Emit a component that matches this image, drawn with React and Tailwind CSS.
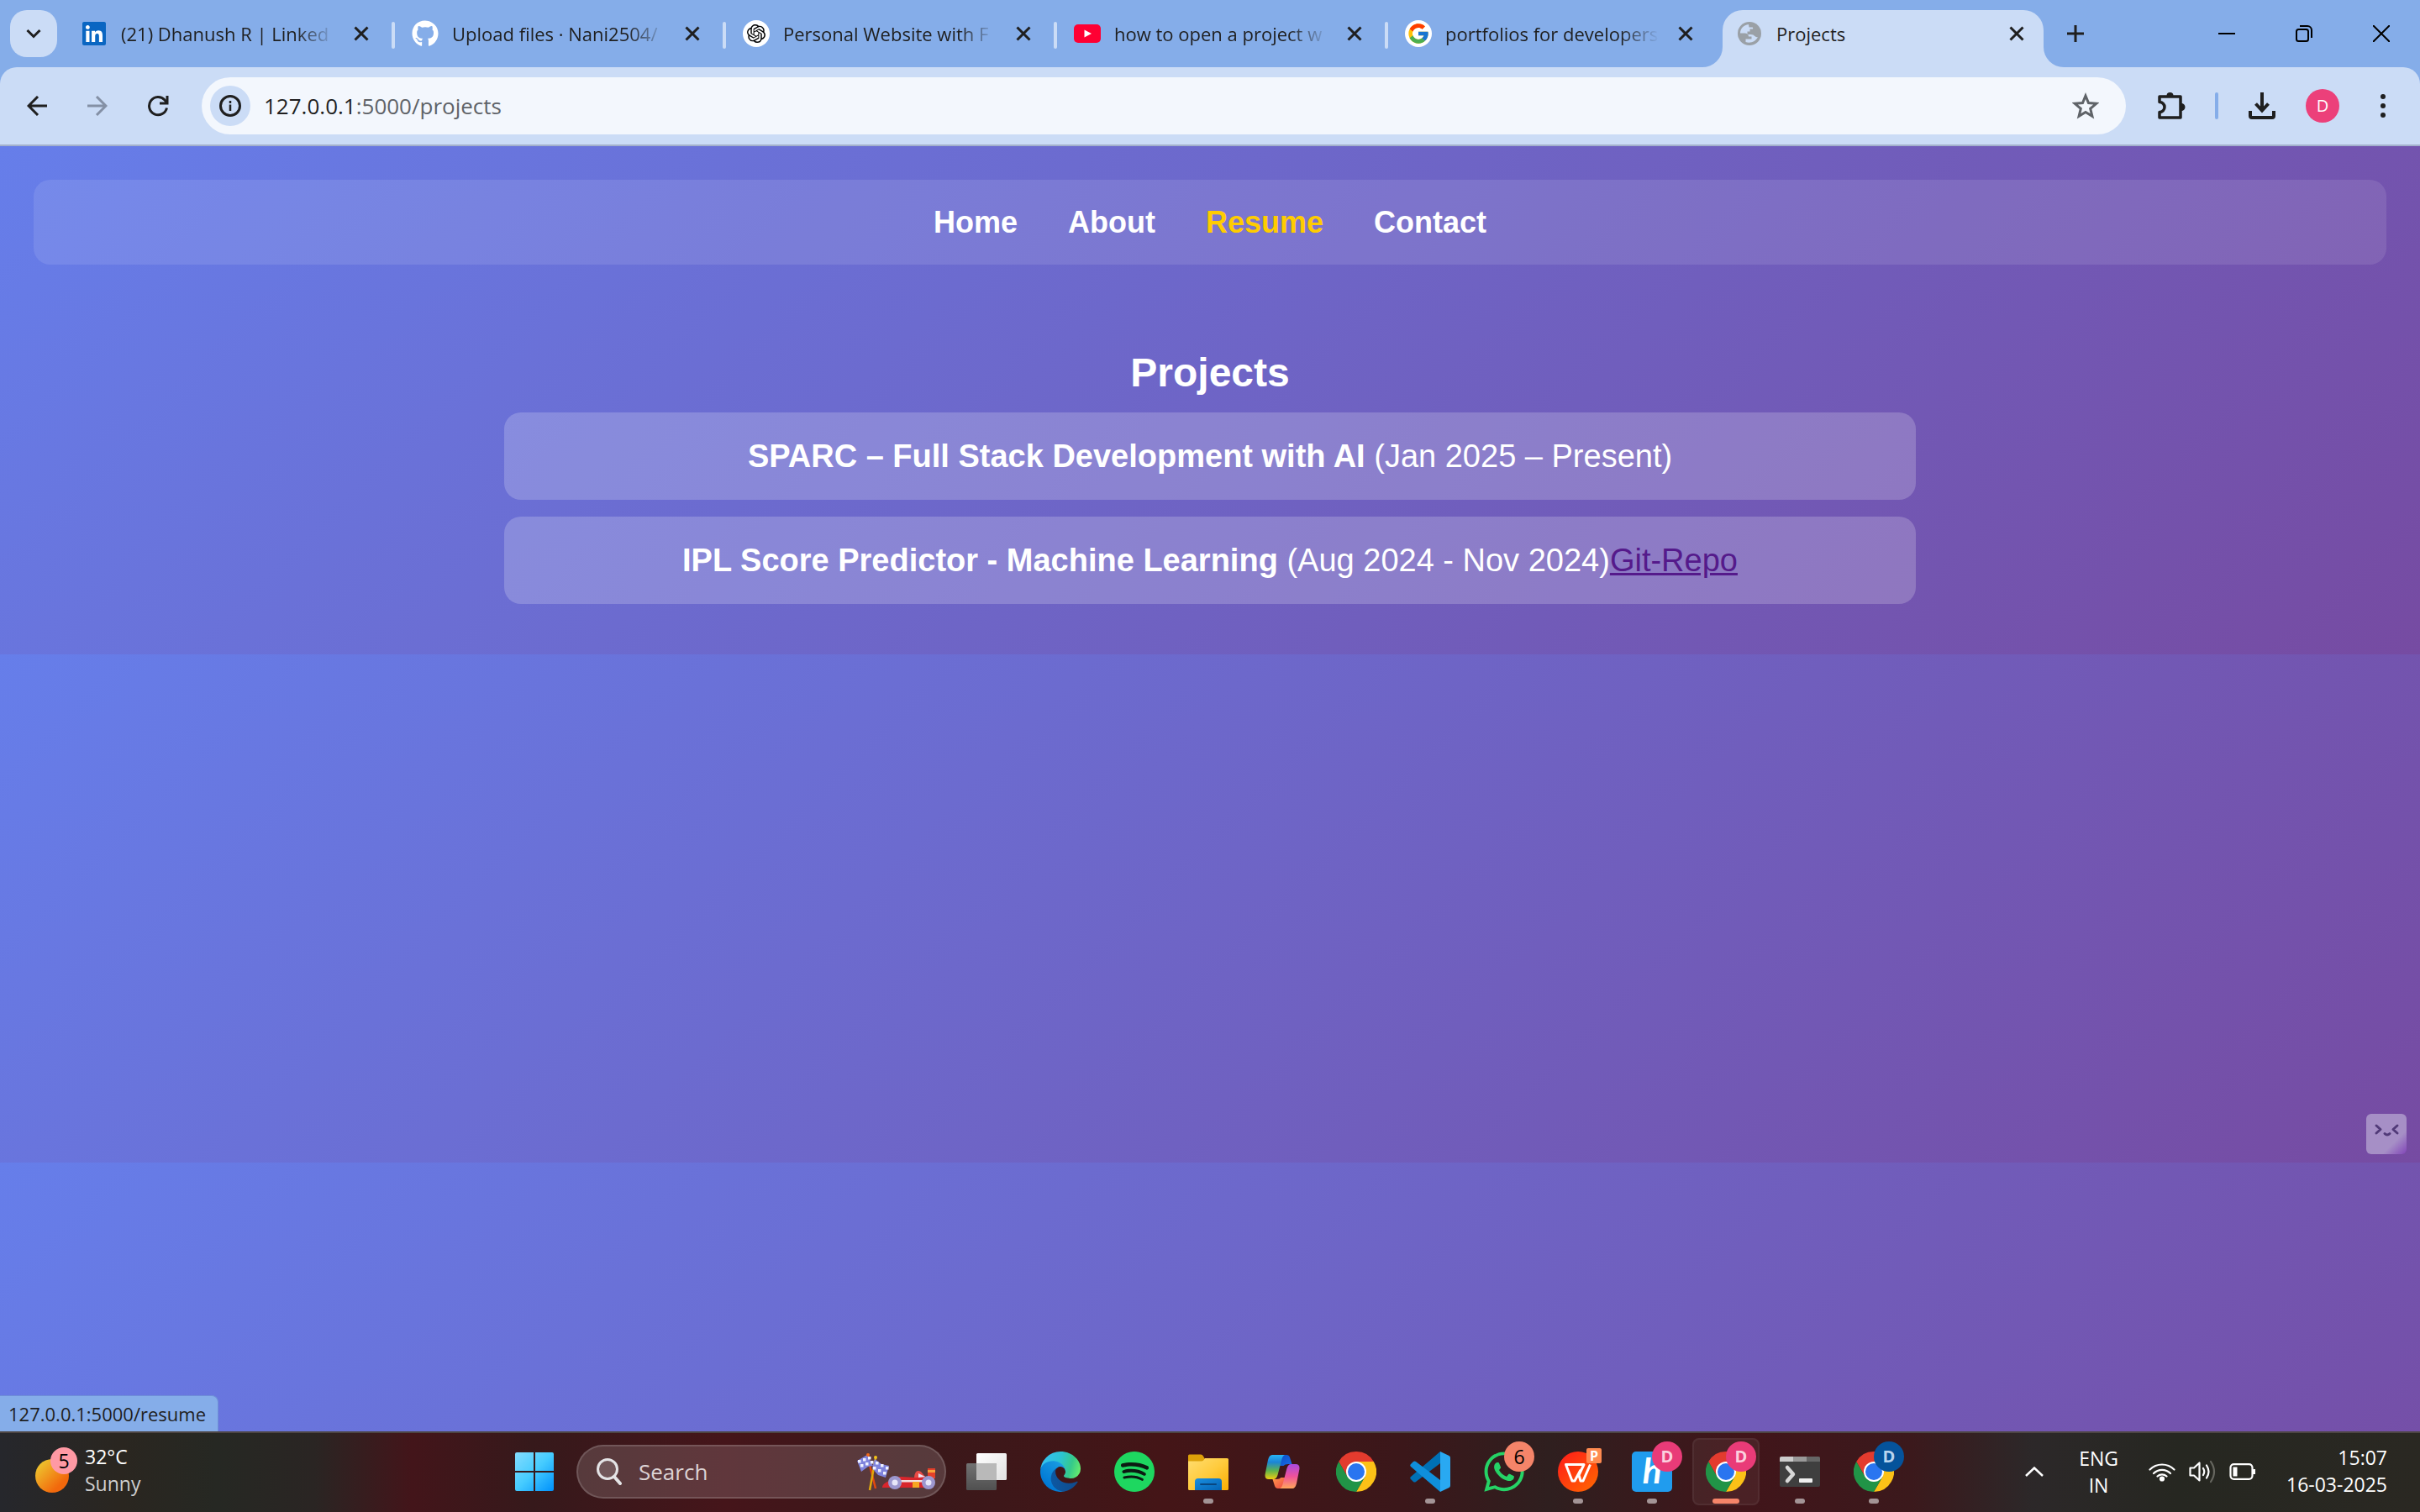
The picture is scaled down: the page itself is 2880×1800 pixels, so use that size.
import React from "react";
import { FaGithub, FaSpotify, FaWhatsapp } from "react-icons/fa";
import { FaLinkedin } from "react-icons/fa6";
import { FcGoogle } from "react-icons/fc";
import { SiOpenai } from "react-icons/si";

/* ---------- favicons ---------- */

function LinkedInIcon() {
  return (
    <span className="flex size-7 items-center justify-center rounded-xs bg-[linear-gradient(#fff,#fff)] bg-[length:22px_22px] bg-center bg-no-repeat">
      <FaLinkedin className="size-8 shrink-0 text-[#0a66c2]" />
    </span>
  );
}

function OpenAiIcon() {
  return (
    <span className="flex size-8 items-center justify-center rounded-full bg-white">
      <SiOpenai className="size-[22px] text-black" />
    </span>
  );
}

function YouTubeIcon() {
  return (
    <svg viewBox="0 0 32 32" className="size-8">
      <rect y="5" width="32" height="22" rx="5" fill="#ff0033" />
      <path d="M12.500 11.500 21 16l-8.500 4.500z" fill="#fff" />
    </svg>
  );
}

function GoogleIcon() {
  return (
    <span className="flex size-8 items-center justify-center rounded-full bg-white">
      <FcGoogle className="size-7" />
    </span>
  );
}

function GlobeIcon() {
  return (
    <svg viewBox="0 0 28 28" className="size-7">
      <circle cx="14" cy="14" r="14" fill="#9aa0a6" />
      <path
        d="M13 3C7 3.500 3 8.500 3 13.500h5.500c2.500 0 4.500 1.500 4.500 4h3.500v3H9.500v3.500c5.500 2 12-.5 14.500-6-1 .5-2 .3-3-.5-2-1.700-3-2.500-5.500-2.500h-4v-3.500h3V8.500h3.500c.5-1.500 0-2-1-2h-3.500z"
        fill="#cbdcf6"
      />
    </svg>
  );
}

/* ---------- browser window ---------- */

const tabs = [
  { title: "(21) Dhanush R | Linked", icon: <LinkedInIcon /> },
  { title: "Upload files · Nani2504/", icon: <FaGithub className="size-8 text-white" /> },
  { title: "Personal Website with F", icon: <OpenAiIcon /> },
  { title: "how to open a project w", icon: <YouTubeIcon /> },
  { title: "portfolios for developers", icon: <GoogleIcon /> },
  { title: "Projects", icon: <GlobeIcon />, active: true },
];

function CloseGlyph() {
  return (
    <svg viewBox="0 0 32 32" className="size-8" fill="none" stroke="#1f1f1f" strokeWidth="3">
      <path d="m8.500 8.500 15 15m0-15-15 15" />
    </svg>
  );
}

function Tab({ tab, last }) {
  return (
    <div className="relative flex h-full w-[394px] min-w-0 items-center pt-1">
      {tab.active && (
        <div className="absolute inset-x-1.5 top-3 bottom-0 rounded-t-3xl bg-[#cbdcf6]">
          <div className="absolute right-full bottom-0 size-6 overflow-hidden">
            <div className="size-6 rounded-br-3xl shadow-[12px_12px_0_12px_#cbdcf6]" />
          </div>
          <div className="absolute bottom-0 left-full size-6 overflow-hidden">
            <div className="size-6 rounded-bl-3xl shadow-[-12px_12px_0_12px_#cbdcf6]" />
          </div>
        </div>
      )}
      <div className="relative -mt-1 flex min-w-0 flex-1 items-center px-[22px]">
        <span className="flex size-8 shrink-0 items-center justify-center">{tab.icon}</span>
        <span
          className={
            "mr-4 ml-4 min-w-0 flex-1 text-[22px] leading-8 whitespace-nowrap text-[#1f1f1f] " +
            (tab.active ? "" : "[mask-image:linear-gradient(to_right,#000_82%,transparent)]")
          }
        >
          {tab.title}
        </span>
        <button type="button" aria-label={"Close " + tab.title} className="shrink-0">
          <CloseGlyph />
        </button>
      </div>
      {!tab.active && !last && <span className="-mx-0.5 h-8 w-1 rounded-full bg-[#cbdcf6]" />}
    </div>
  );
}

function TabStrip() {
  return (
    <div className="flex h-20 items-center bg-[#85ade9]">
      <button type="button" aria-label="Search tabs" className="mr-1.5 ml-3 flex size-14 shrink-0 items-center justify-center rounded-[20px] bg-[#cbdcf6]">
        <svg viewBox="0 0 20 20" className="size-5" fill="none" stroke="#1f1f1f" strokeWidth="3">
          <path d="m2.500 6 7.500 7.500L17.500 6" />
        </svg>
      </button>
      <div className="flex h-full min-w-0 items-center">
        {tabs.map((tab, i) => (
          <Tab key={tab.title} tab={tab} last={i === 4} />
        ))}
      </div>
      <button type="button" aria-label="New tab" className="ml-3 flex size-10 shrink-0 items-center justify-center">
        <svg viewBox="0 0 20 20" className="size-5" fill="none" stroke="#1f1f1f" strokeWidth="3">
          <path d="M10 0v20M0 10h20" />
        </svg>
      </button>
      <div className="ml-auto flex h-full shrink-0">
        <button type="button" aria-label="Minimise" className="flex w-[92px] items-center justify-center">
          <svg viewBox="0 0 20 20" className="size-5" stroke="#000" strokeWidth="2">
            <path d="M0 10h20" />
          </svg>
        </button>
        <button type="button" aria-label="Restore" className="flex w-[92px] items-center justify-center">
          <svg viewBox="0 0 20 20" className="size-5" fill="none" stroke="#000" strokeWidth="2">
            <rect x="1" y="5" width="14" height="14" rx="2.500" />
            <path d="M5 1h9a5 5 0 0 1 5 5v9" />
          </svg>
        </button>
        <button type="button" aria-label="Close window" className="flex w-[92px] items-center justify-center">
          <svg viewBox="0 0 20 20" className="size-5" fill="none" stroke="#000" strokeWidth="2">
            <path d="m0 0 20 20M20 0 0 20" />
          </svg>
        </button>
      </div>
    </div>
  );
}

function ArrowGlyph({ className, d }) {
  return (
    <svg viewBox="0 0 24 24" className={className} fill="none" stroke="currentColor" strokeWidth="3">
      <path d={d} />
    </svg>
  );
}

function Toolbar() {
  return (
    <div className="bg-[#85ade9]">
      <div className="flex h-[94px] items-center rounded-t-[20px] border-b-2 border-[#a3b1cc] bg-[#cbdcf6] pr-6 text-[#1f1f1f]">
        <button type="button" aria-label="Back" className="ml-2 flex size-[72px] items-center justify-center">
          <ArrowGlyph className="size-6" d="M24 12H2M13 1 2 12l11 11" />
        </button>
        <button type="button" aria-label="Forward" className="flex size-[72px] items-center justify-center text-[#8490a5]">
          <ArrowGlyph className="size-6" d="M0 12h22M11 1l11 11-11 11" />
        </button>
        <button type="button" aria-label="Reload" className="flex size-[72px] items-center justify-center">
          <svg viewBox="0 0 26 26" className="size-[26px]" fill="none" stroke="currentColor" strokeWidth="3">
            <path d="M23.500 15.500A10.600 10.600 0 1 1 21 6l2 3" />
            <path d="M24 1v9h-9" />
          </svg>
        </button>
        <div className="ml-4 flex h-[68px] min-w-0 flex-1 items-center rounded-full bg-[#f3f7fd] pr-7 pl-2.5 text-[26px] leading-9">
          <button type="button" aria-label="Site information" className="flex size-12 items-center justify-center rounded-full bg-[#cbdcf6]">
            <svg viewBox="0 0 26 26" className="size-[26px]" fill="none" stroke="currentColor" strokeWidth="3">
              <circle cx="13" cy="13" r="11.500" />
              <path d="M13 11.500V19M13 7v3" strokeWidth="2.500" />
            </svg>
          </button>
          <label htmlFor="address" className="ml-4">
            127.0.0.1
          </label>
          <input id="address" defaultValue=":5000/projects" className="min-w-0 flex-1 bg-transparent text-[#5f6368] outline-none" />
          <button type="button" aria-label="Bookmark this tab" className="flex size-10 items-center justify-center text-[#5f6368]">
            <svg viewBox="0 0 32 32" className="size-8" fill="none" stroke="currentColor" strokeWidth="3">
              <path d="m16 4 3.500 8.600 9.300.7-7.100 6 2.200 9L16 23.500l-7.900 4.800 2.200-9-7.100-6 9.300-.7z" />
            </svg>
          </button>
        </div>
        <button type="button" aria-label="Extensions" className="ml-[34px] flex size-10 items-center justify-center">
          <svg viewBox="0 0 36 36" className="size-9" fill="none" stroke="currentColor" strokeWidth="3.500" strokeLinejoin="round">
            <path d="M4 7h25v25H4v-6.500a5.500 5.500 0 0 0 0-12z" />
            <path d="M12.500 6a4 4 0 0 1 8 0zM30 15a4 4 0 0 1 0 9z" fill="currentColor" stroke="none" />
          </svg>
        </button>
        <span className="mx-8 h-8 w-1 rounded-full bg-[#85ade9]" />
        <button type="button" aria-label="Downloads" className="flex size-10 items-center justify-center">
          <svg viewBox="0 0 32 32" className="size-8" fill="none" stroke="currentColor" strokeWidth="4">
            <path d="M16 0v22M8.500 13.500l7.500 8 7.500-8M2 22v6q0 2 2 2h24q2 0 2-2v-6" />
          </svg>
        </button>
        <button type="button" className="ml-8 flex size-10 items-center justify-center rounded-full bg-[#ec407a] text-xl text-white">
          D
        </button>
        <button type="button" aria-label="Menu" className="ml-8 flex size-10 items-center justify-center">
          <svg viewBox="0 0 6 28" className="h-7 w-1.5" fill="currentColor">
            <circle cx="3" cy="3" r="3" />
            <circle cx="3" cy="14" r="3" />
            <circle cx="3" cy="25" r="3" />
          </svg>
        </button>
      </div>
    </div>
  );
}

/* ---------- web page ---------- */

const links = ["Home", "About", "Resume", "Contact"];

function Page() {
  return (
    <main className="relative flex-1 bg-[linear-gradient(135deg,#667eea,#764ba2)] bg-[length:100%_605px] bg-repeat-y p-10 font-['Liberation_Sans',Arial,sans-serif] text-white">
      <nav className="flex justify-center gap-[60px] rounded-[20px] bg-white/10 py-[30px] text-4xl leading-[41px] font-bold">
        {links.map((link) => (
          <a key={link} href={"#" + link.toLowerCase()} className={link === "Resume" ? "text-[#ffcc00]" : "text-white"}>
            {link}
          </a>
        ))}
      </nav>
      <section className="mx-auto mt-[101px] w-3/5 text-center">
        <h2 className="text-5xl leading-[55px] font-bold">Projects</h2>
        <ul className="mt-5 flex flex-col gap-5 text-[38px] leading-[44px]">
          <li className="rounded-[20px] bg-white/20 py-[30px]">
            <strong>SPARC – Full Stack Development with AI</strong> (Jan 2025 – Present)
          </li>
          <li className="rounded-[20px] bg-white/20 py-[30px]">
            <strong>IPL Score Predictor - Machine Learning</strong> (Aug 2024 - Nov 2024)
            <a href="#repo" className="text-[#551a8b] underline">
              Git-Repo
            </a>
          </li>
        </ul>
      </section>

      <button
        type="button"
        aria-label="Assistant"
        className="absolute right-4 bottom-[330px] size-12 rounded-md bg-[linear-gradient(135deg,#a68fc6_70%,#8145b8)]"
      >
        <svg viewBox="0 0 48 48" className="size-12" fill="none" stroke="#513a78" strokeWidth="3" strokeLinecap="round" strokeLinejoin="round">
          <path d="m12 14 5 4.500-5 4.500M37 14l-5 4.500 5 4.500M22 23.500q3 3 6 0" />
        </svg>
      </button>
      <div className="absolute bottom-0 left-0 rounded-tr-lg border-t border-r border-[#6f8fd8] bg-[#85ade9] py-1.5 pr-[14px] pl-2.5 font-['Open_Sans',sans-serif] text-[22px] leading-[30px] text-[#1f1f1f]">
        127.0.0.1:5000/resume
      </div>
    </main>
  );
}

/* ---------- taskbar icons ---------- */

function StartIcon() {
  return (
    <svg viewBox="0 0 46 46" className="size-[46px]">
      <defs>
        <linearGradient id="win" gradientUnits="userSpaceOnUse" x1="0" y1="0" x2="46" y2="46">
          <stop stopColor="#84dcfd" />
          <stop offset=".5" stopColor="#45cbff" />
          <stop offset="1" stopColor="#0091fb" />
        </linearGradient>
      </defs>
      <path fill="url(#win)" d="M2 0h20v22H0V2q0-2 2-2zM24 0h20q2 0 2 2v20H24zM0 24h22v22H2q-2 0-2-2zM24 24h22v20q0 2-2 2H24z" />
    </svg>
  );
}

function RaceArt() {
  const light = [
    [1, 9], [7, 7], [13, 5], [4, 14], [10, 12], [16, 10],
    [22, 11], [28, 14], [34, 17], [19, 17], [25, 20], [31, 23],
  ];
  return (
    <svg viewBox="0 0 94 46" className="h-[46px] w-[94px] shrink-0">
      <path d="m12 3 10 40" stroke="#e2490f" strokeWidth="2.500" />
      <path d="m22 7-7 38" stroke="#e0a80c" strokeWidth="2.500" />
      <path d="m0 10 12-7 7 13-6 1-8 6z" fill="#7f83dc" />
      <path d="m21 8 8 6 9 2-4 14-9-3-7-8z" fill="#7f83dc" />
      {light.map(([x, y]) => (
        <rect key={x + "-" + y} x={x} y={y} width="3.500" height="3.500" fill="#eef0ff" />
      ))}
      <circle cx="13" cy="3" r="2" fill="#f06a1c" />
      <circle cx="22" cy="6" r="2" fill="#f5c518" />
      <path d="M30 42q0-5 8-8 6-5 15-5l17 1 8-1h14v10l-8 3H33z" fill="#d9262c" />
      <path d="M50 33h28v2.500H50z" fill="#f3dede" />
      <path d="M66 35h8v7h-8z" fill="#f6a623" />
      <path d="M68 30q1-11 8-7l6 7z" fill="#e84b45" />
      <path d="M73 25l8 4-8 1z" fill="#efe4f4" />
      <path d="M84 19h9v12h-9z" fill="#e3402a" />
      <path d="M84 21h9v3h-9z" fill="#f8a33a" />
      <circle cx="45" cy="36" r="8" fill="#9c97cf" />
      <circle cx="45" cy="36" r="3.500" fill="#e7e6f8" />
      <circle cx="85" cy="36" r="8" fill="#9c97cf" />
      <circle cx="85" cy="36" r="3.500" fill="#e7e6f8" />
    </svg>
  );
}

function TaskViewIcon() {
  return (
    <svg viewBox="0 0 48 48" className="size-12">
      <defs>
        <linearGradient id="tvw" x1="0" y1="0" x2="1" y2="1">
          <stop stopColor="#fff" />
          <stop offset="1" stopColor="#e2e2e2" />
        </linearGradient>
        <linearGradient id="tvg" x1="0" y1="0" x2="0" y2="1">
          <stop stopColor="#727272" />
          <stop offset="1" stopColor="#505050" />
        </linearGradient>
      </defs>
      <rect x="12" y="2" width="36" height="32" rx="1.500" fill="url(#tvw)" />
      <rect x="0" y="14" width="36" height="32" rx="1.500" fill="url(#tvg)" />
      <path d="M12 14h24v20H12z" fill="#b9b9b9" />
    </svg>
  );
}

function EdgeIcon() {
  return (
    <svg viewBox="0 0 256 256" className="size-12">
      <defs>
        <linearGradient id="edA" gradientUnits="userSpaceOnUse" x1="58" y1="177" x2="237" y2="177">
          <stop stopColor="#0c59a4" />
          <stop offset="1" stopColor="#114a8b" />
        </linearGradient>
        <linearGradient id="edB" gradientUnits="userSpaceOnUse" x1="157" y1="99" x2="46" y2="221">
          <stop stopColor="#1b9de2" />
          <stop offset=".16" stopColor="#1595df" />
          <stop offset="1" stopColor="#0078d4" />
        </linearGradient>
        <linearGradient id="edC" gradientUnits="userSpaceOnUse" x1="10" y1="60" x2="250" y2="130">
          <stop stopColor="#35c1f1" />
          <stop offset=".45" stopColor="#2cc3d0" />
          <stop offset=".75" stopColor="#36c98a" />
          <stop offset="1" stopColor="#66eb6e" />
        </linearGradient>
      </defs>
      <path fill="url(#edA)" d="M231.110 190.540c-3.410 1.780-6.930 3.350-10.540 4.700a101.940 101.940 0 0 1-35.900 6.460c-47.320 0-88.540-32.550-88.540-74.320 0-11.370 6.440-21.870 16.730-27.300-42.800 1.800-53.800 46.400-53.800 72.530 0 73.880 68.090 81.370 82.760 81.370 7.910 0 19.840-2.300 27-4.560l1.310-.44a128.340 128.340 0 0 0 66.600-52.800 4 4 0 0 0-5.620-5.640z" />
      <path fill="url(#edB)" d="M105.730 241.420a79.200 79.200 0 0 1-22.740-21.340 80.720 80.720 0 0 1 29.530-120c3.120-1.470 8.450-4.130 15.540-4 10.130.08 19.650 4.900 25.720 13a31.880 31.880 0 0 1 6.300 18.260c0-.2 24.460-79.600-80-79.600-43.900 0-80 41.660-80 78.200-.17 19.330 3.970 38.450 12.120 56a128 128 0 0 0 156.370 67.110 75.550 75.550 0 0 1-62.780-7.630z" />
      <path fill="url(#edC)" d="M152.330 148.860c-.81 1.050-3.300 2.500-3.300 5.660 0 2.610 1.700 5.120 4.720 7.230 14.380 10 41.490 8.680 41.560 8.680a59.560 59.560 0 0 0 30.270-8.350 61.380 61.380 0 0 0 30.430-52.880c.26-22.410-8-37.310-11.340-43.910C223.460 23.840 177.720 0 128 0A128 128 0 0 0 0 126.200c.48-36.540 36.800-66.050 80-66.050 3.500 0 23.460.34 42 10.070 16.340 8.580 24.900 18.940 30.850 29.210 6.180 10.670 7.280 24.150 7.280 29.520 0 5.370-2.740 13.330-7.800 19.910z" />
    </svg>
  );
}

function SpotifyIcon() {
  return (
    <span className="flex size-12 items-center justify-center rounded-full bg-[radial-gradient(circle,#0c1a12_60%,#1ed760_61%)]">
      <FaSpotify className="size-12 text-[#1ed760]" />
    </span>
  );
}

function FolderIcon() {
  return (
    <svg viewBox="0 0 48 48" className="size-12">
      <defs>
        <linearGradient id="fol" x1="0" y1="0" x2="1" y2="1">
          <stop stopColor="#ffdd70" />
          <stop offset=".5" stopColor="#ffcb3d" />
          <stop offset="1" stopColor="#f9ad03" />
        </linearGradient>
        <linearGradient id="folb" x1="0" y1="0" x2="1" y2="1">
          <stop stopColor="#1a8fe0" />
          <stop offset="1" stopColor="#0463b3" />
        </linearGradient>
      </defs>
      <path d="M1.500 3.500H15q2 0 3 2L20 9v6H0V5q0-1.500 1.500-1.500z" fill="#dda109" />
      <path d="M0 11.500h16q2 0 3-2l1-1.500h26.500Q48 8 48 9.500v35q0 1.500-1.500 1.500h-45Q0 46 0 44.500z" fill="url(#fol)" />
      <path d="M8 46V36q0-4 4-4h24q4 0 4 4v10z" fill="url(#folb)" />
      <path d="M15 39h18" stroke="#08467f" strokeWidth="2" strokeLinecap="round" />
    </svg>
  );
}

function CopilotIcon() {
  return (
    <svg viewBox="0 0 48 48" className="size-12">
      <defs>
        <linearGradient id="cpA" x1="0" y1="0" x2="0" y2="1">
          <stop stopColor="#28b5f5" />
          <stop offset=".3" stopColor="#1b84d6" />
          <stop offset=".65" stopColor="#5fb34c" />
          <stop offset="1" stopColor="#f0cc10" />
        </linearGradient>
        <linearGradient id="cpB" x1="0" y1="0" x2="0" y2="1">
          <stop stopColor="#a84be0" />
          <stop offset=".5" stopColor="#f0529a" />
          <stop offset="1" stopColor="#ffa65a" />
        </linearGradient>
        <linearGradient id="cpC" x1="0" y1="0" x2="1" y2="1">
          <stop stopColor="#0a4fc4" />
          <stop offset="1" stopColor="#1a6ae8" />
        </linearGradient>
        <linearGradient id="cpD" x1="0" y1="0" x2="1" y2="1">
          <stop stopColor="#ff9a4a" />
          <stop offset="1" stopColor="#ee4444" />
        </linearGradient>
      </defs>
      <path d="M22 4h7q3 0 4 3l2.500 8H31q-4 0-5.500 2H20z" fill="url(#cpC)" />
      <path d="M26 44h-7q-3 0-4-3l-2.500-8H17q4 0 5.500-2H28z" fill="url(#cpD)" />
      <path d="M12 4h15q-2.500 1-3.500 5l-5 19q-1.500 5-5 5H8q-6 0-4-8L7 10q1.500-6 5-6z" fill="url(#cpA)" />
      <path d="M36 44H21q2.500-1 3.500-5l5-19q1.500-5 5-5H40q6 0 4 8l-3 15q-1.500 6-5 6z" fill="url(#cpB)" />
    </svg>
  );
}

function ChromeIcon() {
  return (
    <svg viewBox="0 0 48 48" className="size-12">
      <path d="M3.215 12A24 24 0 0 1 44.785 12H24v12L13.600 30z" fill="#e33b2e" />
      <path d="M44.785 12A24 24 0 0 1 24 48l10.400-18L24 24V12z" fill="#fcc117" />
      <path d="M24 48A24 24 0 0 1 3.215 12L13.600 30 24 24l10.400 6z" fill="#219447" />
      <circle cx="24" cy="24" r="12" fill="#fff" />
      <circle cx="24" cy="24" r="10" fill="#2a75f0" />
    </svg>
  );
}

function CodeIcon() {
  return (
    <svg viewBox="0 0 48 48" className="size-12">
      <path d="M36 0v14L7 36q-1.500 1-3 0l-3-3q-1.500-1.500 0-3z" fill="#0070b5" />
      <path d="M36 48V34L7 12q-1.500-1-3 0l-3 3q-1.500 1.500 0 3z" fill="#0f8fdb" />
      <path d="m36 0 10.500 5Q48 5.700 48 7.500v33q0 1.800-1.500 2.500L36 48z" fill="#29a9f2" />
    </svg>
  );
}

function WpsIcon() {
  return (
    <svg viewBox="0 0 48 48" className="size-12">
      <defs>
        <linearGradient id="wps" x1="0" y1="0" x2="1" y2="1">
          <stop stopColor="#ff1a1a" />
          <stop offset="1" stopColor="#ff6a00" />
        </linearGradient>
      </defs>
      <circle cx="24" cy="24" r="24" fill="url(#wps)" />
      <path d="m27 22-7 13h-3L9.500 15.500H31L25 28l2 7h3l8.500-19.500" fill="none" stroke="#fff" strokeWidth="3" strokeLinejoin="round" />
    </svg>
  );
}

function HIcon() {
  return (
    <span className="flex size-12 items-center justify-center rounded-[5px] bg-[#209cee] pb-1 font-['Lato',sans-serif] text-[42px] leading-none font-bold text-white italic">
      h
    </span>
  );
}

function TerminalIcon() {
  return (
    <svg viewBox="0 0 48 48" className="size-12">
      <path d="M0 8q0-2 2-2h44q2 0 2 2v32q0 2-2 2H2q-2 0-2-2z" fill="#3f3f3f" />
      <path d="M0 12V8q0-2 2-2h14v6z" fill="#cccccc" />
      <path d="M16 6h16v6H16z" fill="#999" />
      <path d="M32 6h14q2 0 2 2v4H32z" fill="#666" />
      <path d="m9 19 7 8-7 8" fill="none" stroke="#d8d8d8" strokeWidth="4.500" strokeLinecap="round" strokeLinejoin="round" />
      <rect x="23" y="32" width="16" height="5" rx="1" fill="#efefef" />
    </svg>
  );
}

/* ---------- taskbar ---------- */

const apps = [
  { name: "Task View", icon: <TaskViewIcon /> },
  { name: "Edge", icon: <EdgeIcon /> },
  { name: "Spotify", icon: <SpotifyIcon /> },
  { name: "File Explorer", icon: <FolderIcon />, open: true },
  { name: "Copilot", icon: <CopilotIcon /> },
  { name: "Chrome", icon: <ChromeIcon /> },
  { name: "Code", icon: <CodeIcon />, open: true },
  { name: "WhatsApp", icon: <FaWhatsapp className="size-[54px] text-[#25d366]" />, badge: "6", tone: "bg-[#f58469] text-black text-[23px]" },
  { name: "WPS", icon: <WpsIcon />, open: true, corner: "P" },
  { name: "H", icon: <HIcon />, open: true, badge: "D", tone: "bg-[#e93b78] text-[#fbd0de] text-xl font-bold" },
  { name: "Chrome, Projects", icon: <ChromeIcon />, active: true, badge: "D", tone: "bg-[#e93b78] text-[#fbd0de] text-xl font-bold" },
  { name: "Terminal", icon: <TerminalIcon />, open: true },
  { name: "Chrome, second profile", icon: <ChromeIcon />, open: true, badge: "D", tone: "bg-[#05539b] text-[#b9d4ee] text-xl font-bold" },
];

function AppButton({ app }) {
  return (
    <button
      type="button"
      aria-label={app.name}
      className={
        "relative mx-1 flex size-20 items-center justify-center rounded-lg " +
        (app.active ? "bg-white/5 ring-2 ring-white/5 ring-inset" : "")
      }
    >
      {app.icon}
      {app.badge && (
        <span className={"absolute top-1 right-1 flex size-9 items-center justify-center rounded-full leading-none " + app.tone}>
          {app.badge}
        </span>
      )}
      {app.corner && (
        <span className="absolute top-3 right-3 flex size-[18px] items-center justify-center rounded-xs bg-[#ff8a50] text-base leading-none font-bold text-white">
          {app.corner}
        </span>
      )}
      {app.open && <span className="absolute bottom-[2px] h-1.5 w-3 rounded-full bg-[#a39496]" />}
      {app.active && <span className="absolute bottom-[2px] h-1.5 w-8 rounded-full bg-[#f58469]" />}
    </button>
  );
}

function Taskbar() {
  return (
    <footer className="grid h-24 grid-cols-[1fr_auto_1fr] items-center border-t-2 border-[#4d4543] bg-[linear-gradient(90deg,#26272c_0%,#2a2620_5%,#262823_9%,#2a2523_13%,#43151a_17%,#36191b_22%,#45151a_30%,#3a181a_38%,#441517_48%,#3b171a_58%,#2f1f1f_64%,#41151a_72%,#3b191c_79%,#2c2829_84%,#262721_90%,#2a2822_100%)] pb-0.5 text-[23px] leading-8 text-white">
      <div className="flex items-center pb-1 pl-[42px]">
        <div className="relative h-[54px] w-[50px]">
          <div className="absolute bottom-0 left-0 size-10 rounded-full bg-[linear-gradient(135deg,#eec02c_15%,#f2680c_75%)]" />
          <div className="absolute top-0 right-0 flex size-8 items-center justify-center rounded-full bg-[#ff99a4] text-black">5</div>
        </div>
        <div className="ml-[9px]">
          <div>32°C</div>
          <div className="text-[#cfcfcf]">Sunny</div>
        </div>
      </div>

      <div className="flex items-center">
        <button type="button" aria-label="Start" className="flex size-[60px] items-center justify-center">
          <StartIcon />
        </button>
        <label className="mr-1 ml-5 flex h-16 w-[440px] items-center rounded-full border-2 border-white/15 bg-white/15 pr-2.5 pl-[22px]">
          <svg viewBox="0 0 30 32" className="h-8 w-[30px] shrink-0" fill="rgba(255,255,255,.15)" stroke="#e4e4e6" strokeWidth="3" strokeLinecap="round">
            <circle cx="13" cy="13" r="11.500" />
            <path d="m21 22 7 8" strokeWidth="4" />
          </svg>
          <input aria-label="Search" placeholder="Search" className="ml-5 min-w-0 flex-1 bg-transparent text-[26px] leading-9 outline-none placeholder:text-[#dcd3d4]" />
          <RaceArt />
        </label>
        {apps.map((app) => (
          <AppButton key={app.name} app={app} />
        ))}
      </div>

      <div className="flex items-center justify-end pr-[39px]">
        <button type="button" aria-label="Show hidden icons">
          <svg viewBox="0 0 22 12" className="h-3 w-[22px]" fill="none" stroke="#fff" strokeWidth="2.500">
            <path d="M1 11 11 1.500 21 11" />
          </svg>
        </button>
        <div className="ml-[42px] text-center">
          <div>ENG</div>
          <div>IN</div>
        </div>
        <button type="button" aria-label="Network, sound and battery" className="ml-9 flex items-center gap-4">
          <svg viewBox="0 0 32 24" className="h-6 w-8" fill="none" stroke="#fff" strokeWidth="2.200" strokeLinecap="round">
            <path d="M1.500 9.500a20.500 20.500 0 0 1 29 0M6 14a14 14 0 0 1 20 0M10.500 17.500a8 8 0 0 1 11 0" />
            <circle cx="16" cy="20.500" r="2" fill="#fff" />
          </svg>
          <svg viewBox="0 0 32 28" className="h-7 w-8" fill="none" stroke="#fff" strokeWidth="2.200" strokeLinecap="round" strokeLinejoin="round">
            <path d="M1.500 9.500H6l6.500-6v21l-6.500-6H1.500zM17 10q2.500 4 0 8M21 6.500q5 7.500 0 15" />
            <path d="M26 2q8 12 0 24" stroke="#66665f" />
          </svg>
          <svg viewBox="0 0 32 20" className="h-5 w-8" fill="none" stroke="#fff" strokeWidth="2.200">
            <rect x="1.500" y="1.200" width="26" height="17.600" rx="4" />
            <path d="M4.500 4.500h5v11h-5zM28 7h3v6h-3z" fill="#fff" stroke="none" />
          </svg>
        </button>
        <div className="ml-9 pb-0.5 text-right">
          <div>15:07</div>
          <div>16-03-2025</div>
        </div>
      </div>
    </footer>
  );
}

export default function App() {
  return (
    <div className="flex min-h-screen flex-col font-['Open_Sans',sans-serif]">
      <TabStrip />
      <Toolbar />
      <Page />
      <Taskbar />
    </div>
  );
}
